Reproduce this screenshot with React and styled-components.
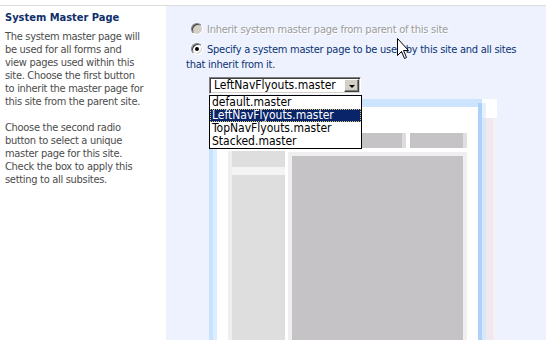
import React from 'react';
import styled, { createGlobalStyle } from 'styled-components';

const GlobalStyle = createGlobalStyle`
  html, body { margin: 0; padding: 0; background: #ffffff; }
  body {
    font-family: "DejaVu Sans Condensed", "DejaVu Sans", Tahoma, sans-serif;
    font-size: 11px;
  }
`;

const Page = styled.div`
  position: relative;
  width: 546px;
  height: 340px;
  padding-top: 5px;
  box-sizing: border-box;
  overflow: hidden;
`;

const Columns = styled.div`
  display: grid;
  grid-template-columns: 166px 1fr;
  height: 335px;
  border-top: 1px solid #dcdcdc;
`;

const Side = styled.div`
  padding: 5px 5px 0 5px;
`;

const Heading = styled.h3`
  margin: 0;
  font-size: 11px;
  line-height: 13px;
  font-weight: bold;
  color: #0e2f6b;
`;

const Description = styled.p`
  margin: 6px 0 0 0;
  line-height: 13px;
  letter-spacing: -0.3px;
  color: #4c4c4c;
`;

const Panel = styled.div`
  position: relative;
  background: #eef2fe;
  padding: 16px 0 0 20px;
`;

const Option = styled.div`
  line-height: 15px;
  margin-bottom: 5px;
  letter-spacing: -0.25px;
  color: ${p => (p.disabled ? '#9c9c9c' : '#0b3375')};
  text-shadow: ${p => (p.disabled ? '1px 1px 0 #ffffff' : 'none')};
  white-space: nowrap;
`;

const Radio = styled.span`
  display: inline-block;
  position: relative;
  width: 12px;
  height: 12px;
  margin: 0 4px 0 5px;
  vertical-align: -2px;
  border-radius: 50%;
  box-sizing: border-box;
  border: 1px solid;
  border-color: #808080 #ffffff #ffffff #808080;
  box-shadow: inset 1px 1px 0 #404040, inset -1px -1px 0 #d4d0c8;
  background: ${p => (p.disabled ? '#d4d0c8' : '#ffffff')};

  &::after {
    content: '';
    display: ${p => (p.checked ? 'block' : 'none')};
    position: absolute;
    left: 3px;
    top: 3px;
    width: 4px;
    height: 4px;
    border-radius: 50%;
    background: #000000;
  }
`;

const Picker = styled.div`
  position: relative;
  margin: 2px 0 0 23px;
  width: 152px;
  font-size: 12px;
`;

const SelectBox = styled.div`
  position: relative;
  height: 17px;
  box-sizing: border-box;
  background: #ffffff;
  border: 1px solid;
  border-color: #808080 #ffffff #ffffff #808080;
  box-shadow: inset 1px 1px 0 #404040, inset -1px -1px 0 #d4d0c8;
  color: #000000;
  line-height: 15px;
  padding-left: 4px;
`;

const ArrowButton = styled.span`
  position: absolute;
  right: 1px;
  top: 1px;
  width: 15px;
  height: 13px;
  box-sizing: border-box;
  background: #d4d0c8;
  border: 1px solid;
  border-color: #ffffff #404040 #404040 #ffffff;
  box-shadow: inset -1px -1px 0 #808080;
  display: flex;
  align-items: center;
  justify-content: center;

  &::after {
    content: '';
    width: 0;
    height: 0;
    border-left: 3px solid transparent;
    border-right: 3px solid transparent;
    border-top: 3px solid #000000;
    margin-top: 1px;
  }
`;

const ListBox = styled.ul`
  position: absolute;
  z-index: 2;
  left: 0;
  top: 18px;
  width: 153px;
  margin: 0;
  padding: 0;
  list-style: none;
  background: #ffffff;
  border: 1px solid #000000;
  box-sizing: border-box;
`;

const ListItem = styled.li`
  height: 13px;
  line-height: 13px;
  padding-left: 2px;
  box-sizing: border-box;
  color: ${p => (p.selected ? '#ffffff' : '#000000')};
  background: ${p => (p.selected ? '#0a246a' : 'transparent')};
  outline: ${p => (p.selected ? '1px dotted #d8c878' : 'none')};
  outline-offset: -1px;
`;

const Preview = styled.div`
  margin: 5px 0 0 23px;
  width: 288px;
  height: 250px;
`;

const Cursor = styled.svg`
  position: absolute;
  left: 397px;
  top: 38px;
  z-index: 3;
`;

const masters = ['default.master', 'LeftNavFlyouts.master', 'TopNavFlyouts.master', 'Stacked.master'];

function LayoutPreview() {
  return (
    <svg width="288" height="250" viewBox="0 0 288 250" shapeRendering="crispEdges">
      <rect x="0" y="0" width="288" height="250" fill="#eef2fe" />
      <rect x="0" y="0" width="4" height="250" fill="#c9e2fd" />
      <rect x="4" y="0" width="4" height="250" fill="#dcedff" />
      <rect x="0" y="0" width="273" height="8" fill="#cce4fe" />
      <rect x="8" y="8" width="261" height="242" fill="#ffffff" />
      <rect x="273" y="0" width="15" height="19" fill="#ffffff" />
      <rect x="269" y="4" width="4" height="246" fill="#acd2f8" />
      <rect x="273" y="4" width="4" height="246" fill="#d8e8f8" />
      <rect x="273" y="4" width="4" height="15" fill="#e4f1ff" />
      <rect x="277" y="19" width="7" height="231" fill="#efe8ee" />
      <rect x="284" y="19" width="4" height="231" fill="#f5f0f5" />

      <rect x="19" y="34" width="174" height="15" fill="#c5c3c6" />
      <rect x="193" y="34" width="4" height="15" fill="#dddcdd" />
      <rect x="201" y="34" width="53" height="15" fill="#c5c3c6" />
      <rect x="254" y="34" width="4" height="15" fill="#e0dfe0" />

      <rect x="19" y="52" width="4" height="198" fill="#efefef" />
      <rect x="23" y="52" width="53" height="16" fill="#dedede" />
      <rect x="23" y="68" width="53" height="8" fill="#f4f4f4" />
      <rect x="23" y="76" width="53" height="174" fill="#dedede" />

      <rect x="79" y="53" width="179" height="4" fill="#efefef" />
      <rect x="79" y="57" width="4" height="193" fill="#efefef" />
      <rect x="83" y="57" width="171" height="193" fill="#c5c3c6" />
      <rect x="254" y="57" width="4" height="193" fill="#efefef" />
    </svg>
  );
}

export default function App() {
  return (
    <>
      <GlobalStyle />
      <Page>
        <Columns>
          <Side>
            <Heading>System Master Page</Heading>
            <Description>
              The system master page will<br />
              be used for all forms and<br />
              view pages used within this<br />
              site. Choose the first button<br />
              to inherit the master page for<br />
              this site from the parent site.<br />
              <br />
              Choose the second radio<br />
              button to select a unique<br />
              master page for this site.<br />
              Check the box to apply this<br />
              setting to all subsites.
            </Description>
          </Side>
          <Panel>
            <Option disabled>
              <Radio disabled />Inherit system master page from parent of this site
            </Option>
            <Option>
              <Radio checked />Specify a system master page to be used by this site and all sites<br />
              that inherit from it.
            </Option>
            <Picker>
              <SelectBox>
                LeftNavFlyouts.master
                <ArrowButton />
              </SelectBox>
              <ListBox>
                {masters.map(m => (
                  <ListItem key={m} selected={m === 'LeftNavFlyouts.master'}>{m}</ListItem>
                ))}
              </ListBox>
            </Picker>
            <Preview>
              <LayoutPreview />
            </Preview>
          </Panel>
        </Columns>
        <Cursor width="13" height="22" viewBox="0 0 13 22">
          <path d="M0.5 0.5 V17.5 L4.5 13.5 L7.5 20.5 L9.5 19.5 L6.5 12.5 H11.5 Z" fill="#ffffff" stroke="#000000" strokeWidth="1" />
        </Cursor>
      </Page>
    </>
  );
}
